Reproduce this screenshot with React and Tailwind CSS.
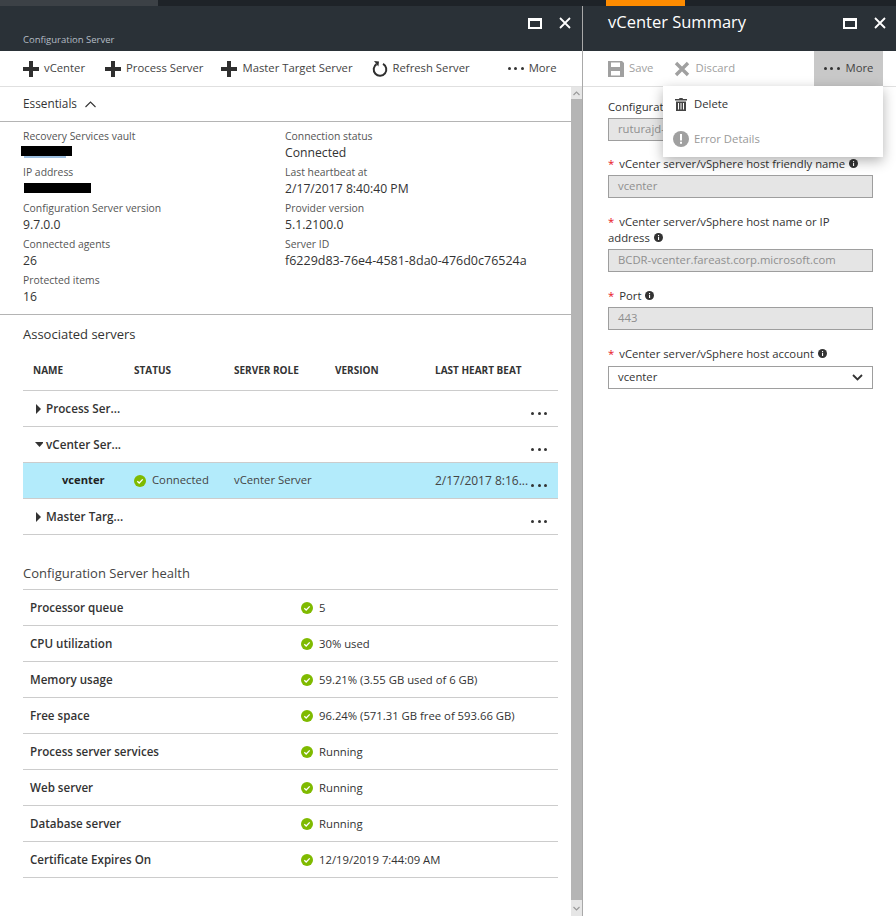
import React from 'react';

const essentialsLeft = [
  ['Recovery Services vault', (
    <div key="a" className="h-4">
      <div className="ml-[-2px] mt-[2px] h-[10px] w-[51px] bg-black" />
      <div className="ml-px h-[2px] w-[42px] bg-[#9dbfe0]" />
    </div>
  )],
  ['IP address', <div key="b" className="h-4"><div className="ml-px mt-[3px] h-[10px] w-[67px] bg-black" /></div>],
  ['Configuration Server version', '9.7.0.0'],
  ['Connected agents', '26'],
  ['Protected items', '16'],
];

const essentialsRight = [
  ['Connection status', 'Connected'],
  ['Last heartbeat at', '2/17/2017 8:40:40 PM'],
  ['Provider version', '5.1.2100.0'],
  ['Server ID', 'f6229d83-76e4-4581-8da0-476d0c76524a'],
];

const health = [
  ['Processor queue', '5'],
  ['CPU utilization', '30% used'],
  ['Memory usage', '59.21% (3.55 GB used of 6 GB)'],
  ['Free space', '96.24% (571.31 GB free of 593.66 GB)'],
  ['Process server services', 'Running'],
  ['Web server', 'Running'],
  ['Database server', 'Running'],
  ['Certificate Expires On', '12/19/2019 7:44:09 AM'],
];

function PlusIcon() {
  return (
    <svg width="16" height="16" viewBox="0 0 16 16" className="shrink-0 fill-[#2f2f2f]">
      <path d="M6 0h4v6h6v4h-6v6H6v-6H0V6h6z" />
    </svg>
  );
}

function RefreshIcon() {
  return (
    <svg width="16" height="18" viewBox="0 0 16 18" fill="none" className="shrink-0">
      <path d="M4.5 4.2a6.3 6.3 0 1 0 6.5-.3" stroke="#2f2f2f" strokeWidth="2" />
      <path d="M2 1l5 .6-.6 5z" fill="#2f2f2f" />
    </svg>
  );
}

function Dots() {
  return (
    <span className="flex gap-[3.5px]">
      <i className="h-[3px] w-[3px] rounded-full bg-[#333]" />
      <i className="h-[3px] w-[3px] rounded-full bg-[#333]" />
      <i className="h-[3px] w-[3px] rounded-full bg-[#333]" />
    </span>
  );
}

function CheckDot() {
  return (
    <svg width="12" height="12" viewBox="0 0 12 12" className="shrink-0">
      <circle cx="6" cy="6" r="6" fill="#7fba00" />
      <path d="M3.3 6.2l1.9 1.8 3.5-3.6" fill="none" stroke="#fff" strokeWidth="1.3" />
    </svg>
  );
}

function InfoDot() {
  return (
    <svg width="9" height="9" viewBox="0 0 9 9" className="shrink-0">
      <circle cx="4.5" cy="4.5" r="4.5" fill="#333" />
      <path d="M4 2h1.1v1H4zM4 3.8h1.1V7H4z" fill="#fff" />
    </svg>
  );
}

function WindowControls() {
  return (
    <div className="flex items-center gap-[17px]">
      <div className="h-[11px] w-[14px] border-2 border-t-[3px] border-white" />
      <svg width="12" height="12" viewBox="0 0 12 12">
        <path d="M1 1l10 10M11 1L1 11" stroke="#fff" strokeWidth="1.8" />
      </svg>
    </div>
  );
}

function Arrow({ down }) {
  return (
    <svg width="8" height="10" viewBox="0 0 8 10" className="shrink-0 fill-[#333]">
      {down ? <path d="M0 2h9L4.5 7z" /> : <path d="M1 0l5 5-5 5z" />}
    </svg>
  );
}

function Field({ label, value, children }) {
  return (
    <div className="mb-[16px]">
      <div className="pr-[10px] text-[11.3px] leading-[16px] text-[#333]">
        <span className="mr-[5px] text-[#e81123]">*</span>
        {label}
        <span className="ml-[4px] inline-block"><InfoDot /></span>
      </div>
      {children || (
        <div className="mt-[3px] flex h-[23px] items-center border border-[#9e9e9e] bg-[#e5e5e5] px-[9px] text-[11.3px] text-[#8f8f8f]">
          {value}
        </div>
      )}
    </div>
  );
}

function ServerRow({ name, down }) {
  return (
    <div className="relative flex h-9 items-center border-b border-[#ccc] pl-[12px] text-[11.7px] font-semibold text-[#333]">
      <Arrow down={down} />
      <span className="ml-[3px]">{name}</span>
      <span className="absolute right-[11px] top-[21px]"><Dots /></span>
    </div>
  );
}

export default function App() {
  return (
    <div className="flex h-[916px] w-[896px] flex-col overflow-hidden bg-white font-['Open_Sans',sans-serif] text-[11.3px] text-[#333]">
      {/* top strip */}
      <div className="flex h-[6px] shrink-0 bg-[#1e2328]">
        <div className="h-full w-[158px] bg-[#3c4146]" />
        <div className="ml-[448px] h-full w-[79px] bg-[#ff8c00]" />
      </div>

      <div className="flex min-h-0 flex-1">
        {/* left blade */}
        <div className="flex w-[583px] shrink-0 flex-col border-r border-[#a9a9a9]">
          <div className="flex h-[45px] shrink-0 justify-between bg-[#2a3137] pl-[23px] pr-[11px]">
            <span className="mt-[28px] text-[9.5px] leading-[12px] text-[#b4bcc4]">Configuration Server</span>
            <div className="mt-[11px] h-[12px]"><WindowControls /></div>
          </div>
          <div className="flex h-9 shrink-0 items-center border-b border-[#e0e0e0] pl-[23px] text-[#444]">
            <PlusIcon /><span className="ml-[5px]">vCenter</span>
            <span className="ml-[20px]"><PlusIcon /></span><span className="ml-[5px]">Process Server</span>
            <span className="ml-[18px]"><PlusIcon /></span><span className="ml-[5px]">Master Target Server</span>
            <span className="ml-[19px]"><RefreshIcon /></span><span className="ml-[5px]">Refresh Server</span>
            <span className="ml-[38px]"><Dots /></span><span className="ml-[5px]">More</span>
          </div>

          <div className="flex min-h-0 flex-1">
            <div className="w-[571px] shrink-0">
              <div className="flex h-[35px] items-center border-b border-[#b4b4b4] pl-[23px] text-[11.8px] text-[#333]">
                Essentials
                <svg width="11" height="7" viewBox="0 0 11 7" className="ml-[8px]" fill="none">
                  <path d="M.5 6l5-5 5 5" stroke="#333" strokeWidth="1.1" />
                </svg>
              </div>

              <div className="flex h-[193px] border-b border-[#b4b4b4] pl-[23px] pt-[6px]">
                <div className="w-[262px]">
                  {essentialsLeft.map(([label, value]) => (
                    <div key={label} className="h-9 leading-[16px]">
                      <div className="text-[10.4px] text-[#555]">{label}</div>
                      <div className="mt-px text-[12.2px] text-[#333]">{value}</div>
                    </div>
                  ))}
                </div>
                <div>
                  {essentialsRight.map(([label, value]) => (
                    <div key={label} className="h-9 leading-[16px]">
                      <div className="text-[10.4px] text-[#555]">{label}</div>
                      <div className={label === 'Server ID' ? 'mt-px text-[12.5px] text-[#333]' : 'mt-px text-[12.2px] text-[#333]'}>{value}</div>
                    </div>
                  ))}
                </div>
              </div>

              <div className="pl-[23px] pr-[13px] pt-[9px]">
                <div className="text-[13px] leading-[20px] text-[#333]">Associated servers</div>

                <div className="mt-[10px] grid h-[37px] grid-cols-[101px_100px_101px_100px_1fr] items-start border-b border-[#ccc] pl-[10px] pt-[9px] text-[10px] font-bold leading-[14px] text-[#333]">
                  <span>NAME</span>
                  <span>STATUS</span>
                  <span>SERVER ROLE</span>
                  <span>VERSION</span>
                  <span>LAST HEART BEAT</span>
                </div>
                <ServerRow name="Process Ser..." />
                <ServerRow name="vCenter Ser..." down />
                <div className="relative grid h-9 grid-cols-[101px_100px_101px_100px_1fr] items-center border-b border-[#ccc] bg-[#b3ebfb] pl-[10px] text-[#444]">
                  <span className="pl-[29px] text-[11.2px] font-bold text-[#222]">vcenter</span>
                  <span className="flex items-center gap-[6px]"><CheckDot />Connected</span>
                  <span>vCenter Server</span>
                  <span />
                  <span className="text-[12px]">2/17/2017 8:16...</span>
                  <span className="absolute right-[11px] top-[21px]"><Dots /></span>
                </div>
                <ServerRow name="Master Targ..." />

                <div className="mt-[28px] text-[13px] leading-[20px] text-[#444]">Configuration Server health</div>
                <div className="mt-[6px] border-t border-[#ccc]">
                  {health.map(([label, value]) => (
                    <div key={label} className="flex h-9 items-center border-b border-[#ccc] pl-[7px] text-[#333]">
                      <span className="w-[271px] text-[11.6px] font-semibold">{label}</span>
                      <span className="flex items-center gap-[6px]"><CheckDot /><span className="mt-[2px]">{value}</span></span>
                    </div>
                  ))}
                </div>
              </div>
            </div>

            {/* scrollbar */}
            <div className="flex w-[11px] shrink-0 flex-col bg-[#b5b5b5]">
              <div className="flex h-[12px] items-center justify-center bg-[#e6e6e6]">
                <svg width="7" height="5" viewBox="0 0 7 5" fill="none"><path d="M.5 4l3-3 3 3" stroke="#9a9a9a" strokeWidth="1.2" /></svg>
              </div>
              <div className="flex-1" />
              <div className="flex h-[16px] items-center justify-center bg-[#e6e6e6]">
                <svg width="7" height="5" viewBox="0 0 7 5" fill="none"><path d="M.5 1l3 3 3-3" stroke="#9a9a9a" strokeWidth="1.2" /></svg>
              </div>
            </div>
          </div>
        </div>

        {/* right blade */}
        <div className="relative min-w-0 flex-1">
          <div className="flex h-[45px] justify-between bg-[#2a3137] pl-[25px] pr-[10px]">
            <span className="mt-[4px] text-[16.5px] leading-[24px] text-white">vCenter Summary</span>
            <div className="mt-[11px] h-[12px]"><WindowControls /></div>
          </div>
          <div className="flex h-9 items-center border-b border-[#e0e0e0] pl-[25px] text-[#a0a0a0]">
            <svg width="16" height="16" viewBox="0 0 16 16" className="fill-[#a0a0a0]">
              <path fillRule="evenodd" d="M0 0h14l2 2v14H0zM3 1.5V6h9V1.5zM3 10v4.5h9V10z" />
            </svg>
            <span className="ml-[5px]">Save</span>
            <svg width="16" height="16" viewBox="0 0 16 16" className="ml-[21px]">
              <path d="M2 2l12 12M14 2L2 14" stroke="#a0a0a0" strokeWidth="3.4" />
            </svg>
            <span className="ml-[5px]">Discard</span>
            <div className="ml-auto mr-[13px] flex h-full w-[69px] items-center justify-center gap-[6px] bg-[#c8c8c8] text-[#444]">
              <Dots />More
            </div>
          </div>

          <div className="pl-[25px] pr-[23px] pt-[12px]">
            <div className="mb-[15px]">
              <div className="leading-[16px] text-[#333]">Configuration Server</div>
              <div className="mt-[3px] flex h-[23px] items-center border border-[#9e9e9e] bg-[#e5e5e5] px-[9px] text-[#8f8f8f]">
                ruturajd-config
              </div>
            </div>
            <Field label="vCenter server/vSphere host friendly name" value="vcenter" />
            <Field label="vCenter server/vSphere host name or IP address" value="BCDR-vcenter.fareast.corp.microsoft.com" />
            <Field label="Port" value="443" />
            <Field label="vCenter server/vSphere host account">
              <div className="mt-[4px] flex h-[23px] items-center justify-between border border-[#9e9e9e] bg-white px-[9px] text-[#333]">
                vcenter
                <svg width="11" height="7" viewBox="0 0 11 7" fill="none">
                  <path d="M1 1l4.5 4.5L10 1" stroke="#333" strokeWidth="1.8" />
                </svg>
              </div>
            </Field>
          </div>

          {/* more menu */}
          <div className="absolute left-[80px] top-[80px] h-[71px] w-[220px] bg-white shadow-[0_4px_12px_rgba(0,0,0,0.3)]">
            <div className="flex h-[35px] items-center pl-[12px] pt-px text-[#333]">
              <svg width="12" height="13" viewBox="0 0 12 13" className="fill-[#444]">
                <path fillRule="evenodd" d="M0 1h4l.5-1h3l.5 1h4v1.5H0zM1 3.5h10V13H1zM3 5v6.5h1V5zM5.5 5v6.5h1V5zM8 5v6.5h1V5z" />
              </svg>
              <span className="ml-[7px]">Delete</span>
            </div>
            <div className="flex h-[36px] items-center pl-[10px] text-[#999]">
              <svg width="16" height="16" viewBox="0 0 16 16">
                <circle cx="8" cy="8" r="8" fill="#a0a0a0" />
                <path d="M7 3h2v6.5H7zM7 10.8h2v2H7z" fill="#fff" />
              </svg>
              <span className="ml-[5px]">Error Details</span>
            </div>
          </div>
        </div>
      </div>
    </div>
  );
}
